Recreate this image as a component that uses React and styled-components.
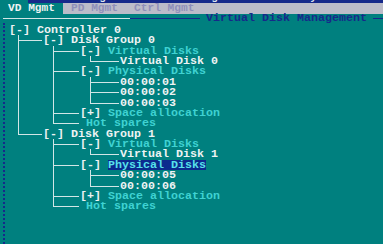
import React from 'react';
import styled, { createGlobalStyle, css } from 'styled-components';

const TEAL = '#00807f';
const NAVY = '#16298a';
const LINE = '#d2e6e6';
const WHITE = '#eef3f3';
const CYAN = '#3fd2d2';

const tree = {
  label: 'Controller 0',
  toggle: '-',
  children: [
    {
      label: 'Disk Group 0',
      toggle: '-',
      children: [
        { label: 'Virtual Disks', toggle: '-', accent: true, children: [{ label: 'Virtual Disk 0' }] },
        {
          label: 'Physical Disks',
          toggle: '-',
          accent: true,
          children: [{ label: '00:00:01' }, { label: '00:00:02' }, { label: '00:00:03' }],
        },
        { label: 'Space allocation', toggle: '+', accent: true },
        { label: 'Hot spares', accent: true },
      ],
    },
    {
      label: 'Disk Group 1',
      toggle: '-',
      children: [
        { label: 'Virtual Disks', toggle: '-', accent: true, children: [{ label: 'Virtual Disk 1' }] },
        {
          label: 'Physical Disks',
          toggle: '-',
          accent: true,
          selected: true,
          children: [{ label: '00:00:05' }, { label: '00:00:06' }],
        },
        { label: 'Space allocation', toggle: '+', accent: true },
        { label: 'Hot spares', accent: true },
      ],
    },
  ],
};

// indent of each level's list, and how far left of it the trunk line sits
const LEVELS = [null, { indent: 34, trunk: 25 }, { indent: 37, trunk: 27 }, { indent: 40, trunk: 30 }];

const tabs = ['VD Mgmt', 'PD Mgmt', 'Ctrl Mgmt'];

const GlobalStyle = createGlobalStyle`
  html, body {
    margin: 0;
    padding: 0;
    background: ${TEAL};
  }
  body {
    width: 383px;
    height: 244px;
    overflow: hidden;
    font-family: "Liberation Mono", "DejaVu Sans Mono", monospace;
  }
`;

const Screen = styled.div`
  width: 383px;
  height: 244px;
  display: flex;
  flex-direction: column;
  background: ${TEAL};
  overflow: hidden;
`;

const TitleBar = styled.div`
  height: 3px;
  display: flex;
  overflow: hidden;
`;

const TitleGap = styled.div`
  width: 128px;
  background: ${TEAL};
`;

const TitleStrip = styled.div`
  flex: 1;
  background: ${NAVY};
  color: #dfe3f2;
  font-size: 11px;
  font-weight: bold;
  line-height: 11px;
  white-space: pre;
  padding-left: 58px;
  margin-top: -8px;
`;

const TabBar = styled.div`
  height: 11px;
  display: flex;
  background: #bcbcc9;
`;

const Tab = styled.div`
  padding: 0 8px;
  font-size: 11.2px;
  font-weight: bold;
  line-height: 11px;
  height: 11px;
  overflow: hidden;
  white-space: pre;
  color: ${p => (p.$active ? WHITE : '#8f8fba')};
  background: ${p => (p.$active ? TEAL : 'transparent')};
`;

const FrameHeader = styled.div`
  height: 9px;
  margin-left: 3px;
  display: flex;
  align-items: center;
`;

const Rule = styled.div`
  height: 1px;
  background: ${p => p.$color};
  width: ${p => (p.$width ? `${p.$width}px` : 'auto')};
  flex: ${p => (p.$width ? 'none' : 1)};
`;

const FrameTitle = styled.div`
  padding: 0 6px;
  font-size: 11.67px;
  font-weight: bold;
  line-height: 9px;
  height: 9px;
  color: ${NAVY};
  white-space: pre;
`;

const Body = styled.div`
  flex: 1;
  margin-left: 3px;
  border-left: 2px dotted ${NAVY};
  padding: 1.8px 0 0 4px;
`;

const Branch = styled.ul`
  list-style: none;
  margin: 0 0 0 ${p => p.$indent}px;
  padding: 0;
`;

const Node = styled.li`
  position: relative;
  ${p =>
    p.$trunk &&
    css`
      &::before {
        content: '';
        position: absolute;
        box-sizing: border-box;
        left: -${p.$trunk}px;
        top: 0;
        width: ${p.$trunk - 1}px;
        height: 6px;
        border-left: 1px solid ${LINE};
        border-bottom: 1px solid ${LINE};
      }
      &:not(:last-child)::after {
        content: '';
        position: absolute;
        left: -${p.$trunk}px;
        top: 5px;
        bottom: 0;
        border-left: 1px solid ${LINE};
      }
    `}
`;

const Label = styled.div`
  height: 10.4px;
  font-size: 11.67px;
  font-weight: bold;
  white-space: pre;
  display: flex;
  padding-left: ${p => (p.$bare ? 6 : 0)}px;
`;

const Toggle = styled.span`
  display: inline-block;
  height: 10.4px;
  line-height: 10.4px;
  color: ${WHITE};
`;

const Text = styled.span`
  display: inline-block;
  height: 10.4px;
  line-height: 10.4px;
  color: ${p => (p.$selected ? '#57e2ea' : p.$accent ? CYAN : WHITE)};
  background: ${p => (p.$selected ? '#0c2a8e' : 'transparent')};
`;

const TreeNode = ({ node, level }) => {
  const conf = LEVELS[level];
  const next = LEVELS[level + 1];
  return (
    <Node $trunk={conf ? conf.trunk : 0}>
      <Label $bare={!node.toggle && node.accent}>
        {node.toggle && <Toggle>{`[${node.toggle}] `}</Toggle>}
        <Text $accent={node.accent} $selected={node.selected}>
          {node.label}
        </Text>
      </Label>
      {node.children && (
        <Branch $indent={next.indent}>
          {node.children.map((child, i) => (
            <TreeNode key={i} node={child} level={level + 1} />
          ))}
        </Branch>
      )}
    </Node>
  );
};

const App = () => {
  return (
    <Screen>
      <GlobalStyle />
      <TitleBar>
        <TitleGap />
        <TitleStrip>{'MegaRAID BIOS Configuration Utility 3.18-0103'}</TitleStrip>
      </TitleBar>
      <TabBar>
        {tabs.map((t, i) => (
          <Tab key={t} $active={i === 0}>
            {t}
          </Tab>
        ))}
      </TabBar>
      <FrameHeader>
        <Rule $color={LINE} $width={127} />
        <Rule $color={NAVY} $width={70} />
        <FrameTitle>Virtual Disk Management</FrameTitle>
        <Rule $color={NAVY} />
      </FrameHeader>
      <Body>
        <Branch $indent={0}>
          <TreeNode node={tree} level={0} />
        </Branch>
      </Body>
    </Screen>
  );
};

export default App;
